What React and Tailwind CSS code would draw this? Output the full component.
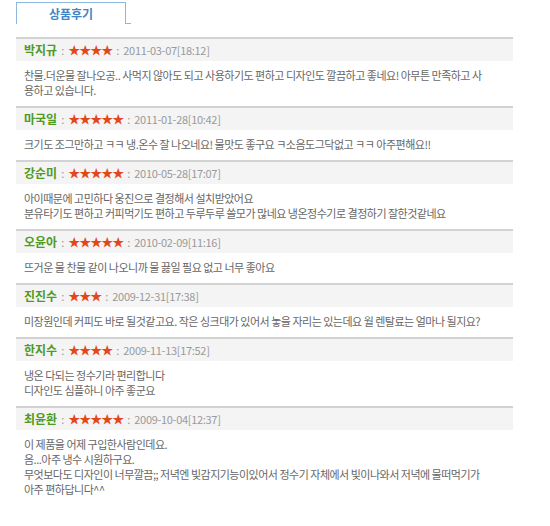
const reviews = [
  {
    name: "박지규",
    stars: 4,
    date: "2011-03-07[18:12]",
    lines: [
      "찬물.더운물 잘나오공.. 사먹지 않아도 되고 사용하기도 편하고 디자인도 깔끔하고 좋네요! 아무튼 만족하고 사",
      "용하고 있습니다.",
    ],
  },
  {
    name: "마국일",
    stars: 5,
    date: "2011-01-28[10:42]",
    lines: ["크기도 조그만하고 ㅋㅋ 냉.온수 잘 나오네요! 물맛도 좋구요 ㅋ소음도그닥없고 ㅋㅋ 아주편해요!!"],
  },
  {
    name: "강순미",
    stars: 5,
    date: "2010-05-28[17:07]",
    lines: [
      "아이때문에 고민하다 웅진으로 결정해서 설치받았어요",
      "분유타기도 편하고 커피먹기도 편하고 두루두루 쓸모가 많네요 냉온정수기로 결정하기 잘한것같네요",
    ],
  },
  {
    name: "오윤아",
    stars: 5,
    date: "2010-02-09[11:16]",
    lines: ["뜨거운 물 찬물 같이 나오니까 물 끓일 필요 없고 너무 좋아요"],
  },
  {
    name: "진진수",
    stars: 3,
    date: "2009-12-31[17:38]",
    lines: ["미장원인데 커피도 바로 될것같고요. 작은 싱크대가 있어서 놓을 자리는 있는데요 월 렌탈료는 얼마나 될지요?"],
  },
  {
    name: "한지수",
    stars: 4,
    date: "2009-11-13[17:52]",
    lines: ["냉온 다되는 정수기라 편리합니다", "디자인도 심플하니 아주 좋군요"],
  },
  {
    name: "최윤환",
    stars: 5,
    date: "2009-10-04[12:37]",
    lines: [
      "이 제품을 어제 구입한사람인데요.",
      "음...아주 냉수 시원하구요.",
      "무엇보다도 디자인이 너무깔끔;; 저녁엔 빛감지기능이있어서 정수기 자체에서 빛이나와서 저녁에 물떠먹기가",
      "아주 편하답니다^^",
    ],
  },
];

function Review({ r }) {
  return (
    <div>
      <div className="flex h-[24px] items-center border-t-2 border-[#d2d2d2] bg-[#f4f4f4] pl-[8px] text-[11px]">
        <span className="font-bold text-[12px] text-[#4f9a1f]">{r.name}</span>
        <span className="mx-[4px] text-[#999]">:</span>
        <span className="text-[12px] tracking-[-1px] text-[#e2471a]">{"★".repeat(r.stars)}</span>
        <span className="ml-[4px] mr-[4px] text-[#999]">:</span>
        <span className="tracking-[-0.3px] text-[#9a9a9a]">{r.date}</span>
      </div>
      <div className="px-[8px] pt-[7px] pb-[8px] text-[11px] leading-[15px] tracking-[-0.5px] text-[#666]">
        {r.lines.map((l, i) => (
          <div key={i} className="whitespace-nowrap">
            {l}
          </div>
        ))}
      </div>
    </div>
  );
}

export default function App() {
  return (
    <div
      className="h-[526px] w-[550px] bg-white pl-[16px] pt-[2px]"
      style={{ fontFamily: '"Noto Sans CJK KR", "Liberation Sans", sans-serif' }}
    >
      <div className="flex items-end">
        <div className="flex h-[22px] w-[110px] items-center justify-center border border-b-0 border-[#8db7dc] text-[12px] font-bold text-[#3f86c6]">
          상품후기
        </div>
        <div className="h-px w-[5px] bg-[#8db7dc]" />
      </div>
      <div className="mt-[13px] w-[497px]">
        {reviews.map((r) => (
          <Review key={r.name} r={r} />
        ))}
      </div>
    </div>
  );
}
